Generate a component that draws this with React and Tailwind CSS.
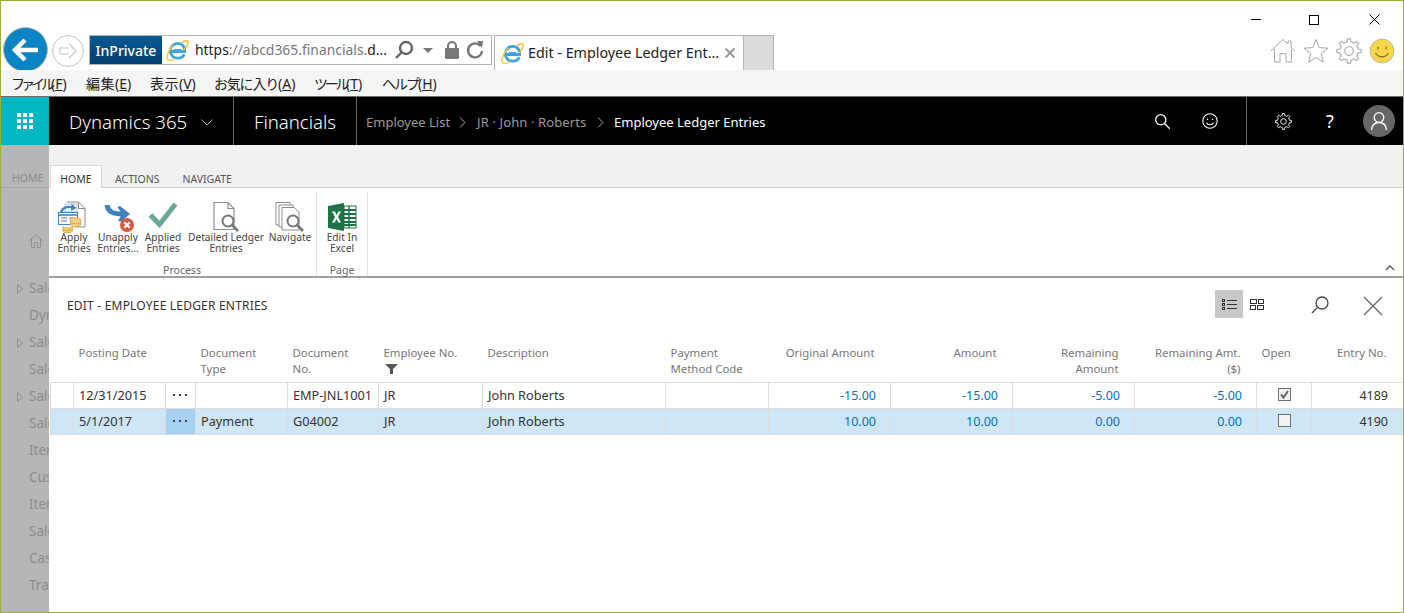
import React from "react";

const FONT = '"Noto Sans", "Noto Sans CJK JP", sans-serif';

function IE({ size = 24 }) {
  return (
    <svg width={size} height={size} viewBox="0 0 24 24" fill="none">
      <path d="M4.5 13 H19.5 C20 7.5 16.5 4.5 12.5 4.5 C8 4.5 4.5 8 4.5 12.5 C4.5 17 8 20 12.5 20 C15.5 20 18 18.5 19.2 16" stroke="#3fa4de" strokeWidth="3" />
      <path d="M8 11 H16" stroke="#3fa4de" strokeWidth="1" />
      <path d="M17 3.5 C20 1.5 23 1.2 23.2 3 C23.5 5 21 8.5 19 11" stroke="#f2b92f" strokeWidth="1.5" strokeLinecap="round" />
      <path d="M7 7 C3 11 0.5 17 1.2 20.5 C1.8 23 5 23 9 21" stroke="#f2c94a" strokeWidth="1.6" strokeLinecap="round" />
    </svg>
  );
}

function gearPath() {
  const n = 8;
  const pts = [];
  for (let i = 0; i < n; i++) {
    const a = (i * 2 * Math.PI) / n;
    const w = (2 * Math.PI) / n;
    [
      [8.6, -0.5 * w],
      [8.6, -0.27 * w],
      [11.3, -0.16 * w],
      [11.3, 0.16 * w],
      [8.6, 0.27 * w],
    ].forEach(([r, d]) => {
      pts.push(`${(12 + r * Math.sin(a + d)).toFixed(2)} ${(12 - r * Math.cos(a + d)).toFixed(2)}`);
    });
  }
  return "M" + pts.join(" L") + " Z";
}

function Gear({ size, color, sw = 1 }) {
  return (
    <svg width={size} height={size} viewBox="0 0 24 24" fill="none" stroke={color} strokeWidth={sw}>
      <circle cx="12" cy="12" r="4" />
      <path d={gearPath()} strokeLinejoin="round" />
    </svg>
  );
}

function Smile({ size, color, sw = 1.2 }) {
  return (
    <svg width={size} height={size} viewBox="0 0 20 20" fill="none" stroke={color} strokeWidth={sw}>
      <circle cx="10" cy="10" r="8" />
      <circle cx="7.2" cy="8" r="0.9" fill={color} stroke="none" />
      <circle cx="12.8" cy="8" r="0.9" fill={color} stroke="none" />
      <path d="M6 12 C7.5 14.8 12.5 14.8 14 12" />
    </svg>
  );
}

function Lens({ size, color, sw = 1.3 }) {
  return (
    <svg width={size} height={size} viewBox="0 0 20 20" fill="none" stroke={color} strokeWidth={sw}>
      <circle cx="12" cy="8" r="6" />
      <path d="M7.6 12.4 L2 18" />
    </svg>
  );
}

function ApplyIcon() {
  return (
    <svg width="32" height="32" viewBox="0 0 32 32" fill="none">
      <path d="M9 1 H20.5 L27 7.5 V26 H18" fill="#fff" stroke="#8a8a8a" />
      <path d="M20.5 1 V7.5 H27" stroke="#8a8a8a" />
      <path d="M7 3 H19 V11 H7 Z" fill="#fff" stroke="#a9bed6" />
      <path d="M3 11.5 C4.5 6 10 5 15 6.5" stroke="#3f85c5" strokeWidth="2.4" />
      <path d="M13.5 2.5 L18.5 7 L13 10 Z" fill="#3f85c5" />
      <rect x="0.5" y="11.5" width="19" height="12" fill="#fff" stroke="#3f85c5" />
      <path d="M0.5 14 H19.5" stroke="#3f85c5" strokeWidth="1.6" />
      <path d="M3 17 H9 M3 20 H9 M11 17 H15" stroke="#3f85c5" />
      <ellipse cx="17.5" cy="18.5" rx="5" ry="1.7" fill="#f4cf86" stroke="#dba94a" />
      <path d="M12.5 18.5 V24 A5 1.7 0 0 0 22.5 24 V18.5" fill="#f4cf86" stroke="#dba94a" />
      <path d="M12.5 21 A5 1.7 0 0 0 22.5 21" stroke="#dba94a" />
      <path d="M5 25.5 A4.7 1.6 0 0 0 14.4 25.5 V30 A4.7 1.6 0 0 1 5 30 Z" fill="#f4cf86" stroke="#dba94a" />
      <path d="M5 28 A4.7 1.6 0 0 0 14.4 28" stroke="#dba94a" />
    </svg>
  );
}

function UnapplyIcon() {
  return (
    <svg width="32" height="32" viewBox="0 0 32 32" fill="none">
      <path d="M5 4 C6 11 11 13 21 13" stroke="#3f7fbf" strokeWidth="5" />
      <path d="M18 5 L28 13 L19 20.5 L16 20 L20 13 L15.5 6 Z" fill="#3f7fbf" />
      <circle cx="25" cy="24" r="7" fill="#d8573c" />
      <path d="M22.2 21.2 L27.8 26.8 M27.8 21.2 L22.2 26.8" stroke="#fff" strokeWidth="2.2" />
    </svg>
  );
}

function CheckIcon() {
  return (
    <svg width="32" height="32" viewBox="0 0 32 32" fill="none">
      <path d="M3.5 14 L12.5 23.5 L28.5 3" stroke="#6ba797" strokeWidth="5" />
    </svg>
  );
}

function DocLens() {
  return (
    <svg width="32" height="32" viewBox="0 0 32 32" fill="none">
      <path d="M4 1.5 H18 L24 7.5 V28.5 H4 Z" fill="#fff" stroke="#8f8f8f" strokeWidth="1.2" />
      <path d="M18 1.5 V7.5 H24" stroke="#8f8f8f" strokeWidth="1.2" />
      <circle cx="18" cy="20" r="5.5" fill="#fff" stroke="#767676" strokeWidth="2" />
      <path d="M22 24 L28 30" stroke="#767676" strokeWidth="2.6" />
    </svg>
  );
}

function DocsLens() {
  return (
    <svg width="32" height="32" viewBox="0 0 32 32" fill="none">
      <path d="M2 1.5 H16 V24 H2 Z" fill="#fff" stroke="#8f8f8f" />
      <path d="M5 4 H19 V26 H5 Z" fill="#fff" stroke="#8f8f8f" />
      <path d="M8 6.5 H20 L25 11 V29 H8 Z" fill="#fff" stroke="#8f8f8f" />
      <circle cx="19" cy="20" r="5.5" fill="#fff" stroke="#767676" strokeWidth="2" />
      <path d="M23 24 L29 30" stroke="#767676" strokeWidth="2.6" />
    </svg>
  );
}

function ExcelIcon() {
  return (
    <svg width="30" height="30" viewBox="0 0 30 30" fill="none">
      <path d="M1 4 L17 1 V29 L1 26 Z" fill="#1f7246" />
      <path d="M5 9.5 H8 L9.6 13 L11.3 9.5 H14 L11 15 L14 20.5 H11.2 L9.5 16.8 L7.8 20.5 H5 L8 15 Z" fill="#fff" />
      <rect x="17" y="4" width="12" height="22" fill="#fff" stroke="#1f7246" />
      <path d="M17 8 H29 M17 12 H29 M17 16 H29 M17 20 H29 M17 23 H29" stroke="#1f7246" strokeWidth="2" />
      <path d="M22 4 V26" stroke="#1f7246" strokeWidth="1.5" />
    </svg>
  );
}

const menu = [
  ["ファイル", "F", "tracking-[-4px]", "w-[57px]"],
  ["編集", "E", "tracking-[0.5px]", "w-[46px]"],
  ["表示", "V", "tracking-[0.5px]", "w-[46px]"],
  ["お気に入り", "A", "tracking-[-1.2px]", "w-[82px]"],
  ["ツール", "T", "tracking-[-3.3px]", "w-[50px]"],
  ["ヘルプ", "H", "tracking-[-2px]", "w-[54px]"],
];

const sideItems = [
  [true, "Sales"],
  [false, "Dynamics"],
  [true, "Sales"],
  [false, "Sales"],
  [true, "Sales"],
  [false, "Sales"],
  [false, "Items"],
  [false, "Customers"],
  [false, "Items"],
  [false, "Sales"],
  [false, "Cash"],
  [false, "Transfer"],
];

const ribbon = [
  ["w-[44px]", <ApplyIcon />, "Apply", "Entries"],
  ["w-[44px]", <UnapplyIcon />, "Unapply", "Entries..."],
  ["w-[46px]", <CheckIcon />, "Applied", "Entries"],
  ["w-[80px]", <DocLens />, "Detailed Ledger", "Entries"],
  ["w-[48px]", <DocsLens />, "Navigate", ""],
];

function RibbonBtn({ w, icon, a, b }) {
  return (
    <div className={`${w} flex flex-col items-center`}>
      <div className="h-[32px] w-[32px] flex items-center justify-center">{icon}</div>
      <div className="mt-[-1px] text-[10.2px] leading-[11px] text-[#444] text-center whitespace-nowrap">
        <div>{a}</div>
        <div>{b}</div>
      </div>
    </div>
  );
}

const headCls = "font-normal align-top pt-[6px] text-[11.4px] leading-[16px] text-[#777] px-[5px]";
const cellCls = "border border-[#dcdcdc] px-[5px] pt-[2px] text-[12.7px] text-[#333] whitespace-nowrap overflow-hidden";
const numCls = "border border-[#dcdcdc] pl-[5px] pr-[14px] pt-[2px] text-right text-[12.5px] text-[#0b6fc0]";

function Dots({ active }) {
  return (
    <td className={`border border-[#dcdcdc] text-center ${active ? "bg-[#a6d1f0]" : ""}`}>
      <div className="flex justify-center gap-[4px] pr-[1px]">
        <span className="w-[2px] h-[2px] bg-[#444]" />
        <span className="w-[2px] h-[2px] bg-[#444]" />
        <span className="w-[2px] h-[2px] bg-[#444]" />
      </div>
    </td>
  );
}

function Row({ date, type, doc, vals, checked, entry, selected }) {
  return (
    <tr className={`h-[26px] ${selected ? "bg-[#cfe6f6]" : "bg-white"}`}>
      <td className="border border-[#dcdcdc]" />
      <td className={cellCls}>{date}</td>
      <Dots active={selected} />
      <td className={cellCls}>{type}</td>
      <td className={cellCls}>{doc}</td>
      <td className={cellCls}>JR</td>
      <td className={cellCls}>John Roberts</td>
      <td className={cellCls} />
      {vals.map((v, i) => (
        <td key={i} className={numCls}>{v}</td>
      ))}
      <td className="border border-[#dcdcdc]">
        <div className="mx-auto mb-[2px] w-[13px] h-[13px] border border-[#707070] bg-[#f2f2f2] flex items-center justify-center">
          {checked && (
            <svg width="11" height="11" viewBox="0 0 11 11" fill="none">
              <path d="M2 5.5 L4.5 8.5 L9 2" stroke="#666" strokeWidth="2" />
            </svg>
          )}
        </div>
      </td>
      <td className="border border-[#dcdcdc] pr-[16px] pt-[2px] text-right text-[12.5px] text-[#333]">{entry}</td>
    </tr>
  );
}

export default function App() {
  return (
    <div
      className="w-[1404px] h-[613px] border border-[#9cb12f] bg-white flex flex-col overflow-hidden"
      style={{ fontFamily: FONT }}
    >
      {/* browser chrome */}
      <div className="h-[69px] flex justify-between shrink-0">
        <div className="flex items-end pl-[2px]">
          <div className="w-[45px] h-[45px] mb-[-2px] rounded-full bg-[#0a84c2] border border-[#b8b8b8] flex items-center justify-center">
            <svg width="28" height="24" viewBox="0 0 28 24" fill="none">
              <path d="M13 2 L3 12 L13 22 M3 12 H26" stroke="#fff" strokeWidth="4.5" />
            </svg>
          </div>
          <div className="ml-[4px] mb-[3px] w-[32px] h-[32px] rounded-full border border-[#c4c4c4] flex items-center justify-center">
            <svg width="20" height="18" viewBox="0 0 20 18" fill="none">
              <path d="M11 2 L18 9 L11 16 M11 6 L2 6 V12 L11 12" stroke="#c8c8c8" strokeWidth="1.2" />
            </svg>
          </div>
          <div className="ml-[5px] mb-[5px] w-[403px] h-[30px] border border-[#b4b4b4] flex items-center pr-[6px]">
            <div className="w-[72px] h-[28px] bg-gradient-to-b from-[#0a5a92] to-[#003f6e] text-white text-[14px] font-medium flex items-center justify-center">
              InPrivate
            </div>
            <div className="ml-[4px] shrink-0">
              <IE size={23} />
            </div>
            <div className="ml-[6px] text-[13.9px] text-[#777] whitespace-nowrap w-[192px]">
              <span className="text-[#222]">https</span>://abcd365.financials.<span className="text-[#222]">d...</span>
            </div>
            <div className="ml-[7px]"><svg width="20" height="20" viewBox="0 0 20 20" fill="none" stroke="#666" strokeWidth="2.4"><circle cx="12" cy="8" r="6" /><path d="M7.6 12.4 L2 18" /></svg></div>
            <div className="ml-[9px] w-0 h-0 border-l-[5px] border-r-[5px] border-t-[5px] border-l-transparent border-r-transparent border-t-[#777]" />
            <div className="ml-[11px]">
              <svg width="16" height="18" viewBox="0 0 16 18" fill="none">
                <rect x="1" y="7" width="14" height="11" rx="1" fill="#777" />
                <path d="M4 8 V5 A4 4 0 0 1 12 5 V8" stroke="#777" strokeWidth="2" />
              </svg>
            </div>
            <div className="ml-[6px]">
              <svg width="18" height="20" viewBox="0 0 18 20" fill="none">
                <path d="M14.5 6 A7 7 0 1 0 16 11" stroke="#777" strokeWidth="2.4" />
                <path d="M11 1 L17 1 L16 8 Z" fill="#777" />
              </svg>
            </div>
          </div>
          <div className="ml-[2px] w-[250px] h-[35px] border border-b-0 border-[#b4b4b4] bg-white flex items-center pl-[6px]">
            <IE size={23} />
            <span className="ml-[4px] text-[14.3px] text-[#222] whitespace-nowrap w-[191px]">Edit - Employee Ledger Ent...</span>
            <svg className="ml-[5px]" width="12" height="12" viewBox="0 0 12 12" fill="none">
              <path d="M1.5 1.5 L10.5 10.5 M10.5 1.5 L1.5 10.5" stroke="#999" strokeWidth="2" />
            </svg>
          </div>
          <div className="w-[30px] h-[35px] border border-l-0 border-b-0 border-[#b4b4b4] bg-[#dcdcdc]" />
        </div>
        <div className="flex flex-col items-end">
          <div className="flex items-center h-[37px]">
            <div className="w-[10px] h-[1px] bg-black mr-[48px]" />
            <div className="w-[10px] h-[10px] border border-black mr-[50px]" />
            <svg className="mr-[23px]" width="11" height="11" viewBox="0 0 11 11" fill="none">
              <path d="M0.5 0.5 L10.5 10.5 M10.5 0.5 L0.5 10.5" stroke="#000" />
            </svg>
          </div>
          <div className="flex items-center mr-[8px] gap-[7px]">
            <svg width="26" height="26" viewBox="0 0 26 26" fill="none" stroke="#a8a8a8">
              <path d="M1 13 L13 1.5 L18 6 V3 H21 V9 L25 13 M4.5 11 V24 H10 V15.5 H16 V24 H21.5 V11" />
            </svg>
            <svg width="26" height="26" viewBox="0 0 26 26" fill="none" stroke="#a8a8a8">
              <path d="M13 1.5 L16.2 9.6 L25 10.2 L18.2 15.7 L20.4 24.2 L13 19.6 L5.6 24.2 L7.8 15.7 L1 10.2 L9.8 9.6 Z" />
            </svg>
            <Gear size={26} color="#a8a8a8" />
            <svg width="26" height="26" viewBox="0 0 26 26" fill="none">
              <circle cx="13" cy="13" r="12" fill="#f8d648" stroke="#b9b9b9" />
              <path d="M9 8.5 V11.5 M17 8.5 V11.5" stroke="#8a7d28" strokeWidth="1.4" />
              <path d="M6.5 15 C9 20 17 20 19.5 15" stroke="#8a7d28" strokeWidth="1.4" />
            </svg>
          </div>
        </div>
      </div>

      {/* menu bar */}
      <div className="h-[27px] bg-[#f5f5f5] border-b border-[#6e6e6e] flex items-center pl-[10px] shrink-0 gap-[18px] text-[14px] text-[#222]">
        {menu.map(([t, k, tr, w], i) => (
          <span key={i} className={`${w} whitespace-nowrap`}>
            <span className={tr}>{t}</span>(<span className="underline">{k}</span>)
          </span>
        ))}
      </div>

      {/* black bar */}
      <div className="h-[48px] bg-black flex items-stretch shrink-0 text-white">
        <div className="w-[48px] bg-[#00b7c3] flex items-center justify-center">
          <div className="grid grid-cols-3 gap-[2px]">
            {Array.from({ length: 9 }).map((_, i) => (
              <span key={i} className="w-[4px] h-[4px] bg-white" />
            ))}
          </div>
        </div>
        <div className="w-[185px] border-r border-[#666] pl-[20px] pt-[2px] flex items-center">
          <span className="text-[18.6px] font-light whitespace-nowrap w-[119px]">Dynamics 365</span>
          <svg className="ml-[13px]" width="12" height="7" viewBox="0 0 12 7" fill="none">
            <path d="M0.5 0.5 L6 6 L11.5 0.5" stroke="#aaa" />
          </svg>
        </div>
        <div className="w-[123px] border-r border-[#666] pl-[20px] pt-[2px] flex items-center">
          <span className="text-[18.6px] font-light">Financials</span>
        </div>
        <div className="flex items-center pl-[9px] pt-[3px] text-[13px] text-[#9a9a9a] whitespace-nowrap">
          <span className="w-[85px]">Employee List</span>
          <svg className="mx-[8px]" width="7" height="11" viewBox="0 0 7 11" fill="none"><path d="M1 0.5 L6 5.5 L1 10.5" stroke="#aaa" /></svg>
          <span className="w-[110px] tracking-[0.12px] ml-[3px]">JR · John · Roberts</span>
          <svg className="mx-[10px]" width="7" height="11" viewBox="0 0 7 11" fill="none"><path d="M1 0.5 L6 5.5 L1 10.5" stroke="#aaa" /></svg>
          <span className="text-white">Employee Ledger Entries</span>
        </div>
        <div className="ml-auto flex items-center">
          <svg width="17" height="17" viewBox="0 0 20 20" fill="none" stroke="#fff" strokeWidth="1.5"><circle cx="8" cy="8" r="6" /><path d="M12.4 12.4 L18.5 18.5" /></svg>
          <div className="ml-[30px]"><Smile size={18} color="#fff" /></div>
          <div className="ml-[27px] w-[1px] h-[48px] bg-[#666]" />
          <div className="ml-[28px]"><Gear size={17} color="#fff" sw={1.3} /></div>
          <span className="ml-[34px] text-[18px] w-[10px]">?</span>
          <div className="ml-[27px] mr-[8px] w-[32px] h-[32px] rounded-full bg-[#666] flex items-center justify-center">
            <svg width="20" height="20" viewBox="0 0 20 20" fill="none" stroke="#fff" strokeWidth="1.3">
              <circle cx="10" cy="6.5" r="4.8" />
              <path d="M2.5 19 C3 13.5 6 11.5 10 11.5 C14 11.5 17 13.5 17.5 19" />
            </svg>
          </div>
        </div>
      </div>

      {/* page */}
      <div className="flex flex-1 min-h-0">
        <div className="w-[48px] shrink-0 bg-[#b6b6b6] overflow-hidden text-[#8c8c8c]">
          <div className="h-[43px] border-b border-[#a9a9a9] flex items-end pl-[11px] text-[10.5px] leading-[18px]">HOME</div>
          <div className="mt-[45px] pl-[27px]">
            <svg width="16" height="16" viewBox="0 0 16 16" fill="none" stroke="#8f8f8f"><path d="M1 8 L8 1.5 L15 8 M3.5 6 V14.5 H6.5 V9.5 H9.5 V14.5 H12.5 V6" /></svg>
          </div>
          <div className="mt-[26px] flex flex-col">
            {sideItems.map(([tri, t], i) => (
              <div key={i} className="h-[27px] flex items-center relative pl-[28px] text-[13.5px] whitespace-nowrap">
                {tri && (
                  <svg className="absolute left-[16px]" width="6" height="10" viewBox="0 0 6 10" fill="none"><path d="M0.5 0.5 L5.5 5 L0.5 9.5 Z" stroke="#8f8f8f" /></svg>
                )}
                {t}
              </div>
            ))}
          </div>
        </div>

        <div className="flex-1 min-w-0 flex flex-col">
          {/* tabs */}
          <div className="h-[43px] bg-[#f1f1f1] border-b border-[#c9d3da] flex items-end pl-[1px] text-[10.5px] leading-[16px] text-[#555] shrink-0">
            <div className="w-[52px] h-[23px] bg-white border border-b-0 border-[#d8d8d8] flex items-center justify-center pt-[3px] mb-[-1px] text-[#333]">HOME</div>
            <div className="ml-[13px] h-[17px] flex items-center">ACTIONS</div>
            <div className="ml-[23px] h-[17px] flex items-center">NAVIGATE</div>
          </div>
          {/* ribbon */}
          <div className="h-[90px] border-b-2 border-[#a0a0a0] flex items-stretch relative shrink-0 pt-[4px]">
            <div className="w-[268px] border-r border-[#e2e2e2] flex flex-col pl-[3px]">
              <div className="flex pt-[9px]">
                {ribbon.map(([w, ic, a, b], i) => (
                  <RibbonBtn key={i} w={w} icon={ic} a={a} b={b} />
                ))}
              </div>
              <div className="mt-auto text-center text-[10.5px] leading-[12px] text-[#666] pr-[4px]">Process</div>
            </div>
            <div className="w-[51px] border-r border-[#e2e2e2] flex flex-col items-center">
              <div className="pt-[9px]">
                <RibbonBtn w="w-[50px]" icon={<ExcelIcon />} a="Edit In" b="Excel" />
              </div>
              <div className="mt-auto text-[10.5px] leading-[12px] text-[#666]">Page</div>
            </div>
            <svg className="absolute right-[8px] bottom-[5px]" width="10" height="7" viewBox="0 0 10 7" fill="none">
              <path d="M1 6 L5 2 L9 6" stroke="#555" strokeWidth="1.3" />
            </svg>
          </div>

          {/* title row */}
          <div className="h-[41px] flex items-center pl-[18px] shrink-0 mt-[7px]">
            <span className="text-[12px] text-[#333] tracking-[0.2px]">EDIT - EMPLOYEE LEDGER ENTRIES</span>
            <div className="ml-auto flex items-center mb-[3px]">
              <div className="w-[28px] h-[28px] bg-[#c8c8c8] flex items-center justify-center">
                <svg width="15" height="11" viewBox="0 0 15 11" fill="none" stroke="#333">
                  <path d="M5 1.5 H15 M5 5.5 H15 M5 9.5 H15" />
                  <rect x="0.5" y="0.5" width="2" height="2" />
                  <rect x="0.5" y="4.5" width="2" height="2" />
                  <rect x="0.5" y="8.5" width="2" height="2" />
                </svg>
              </div>
              <svg className="ml-[7px]" width="14" height="11" viewBox="0 0 14 11" fill="none" stroke="#333">
                <rect x="0.5" y="0.5" width="6" height="4" />
                <rect x="8.5" y="0.5" width="5" height="4" />
                <rect x="0.5" y="6.5" width="5" height="4" />
                <rect x="7.5" y="6.5" width="6" height="4" />
              </svg>
              <div className="ml-[46px] mt-[1px]"><Lens size={20} color="#444" /></div>
              <svg className="ml-[33px] mr-[20px] mt-[3px]" width="20" height="20" viewBox="0 0 20 20" fill="none">
                <path d="M1 1 L19 19 M19 1 L1 19" stroke="#666" strokeWidth="1.3" />
              </svg>
            </div>
          </div>

          {/* table */}
          <table className="table-fixed border-collapse w-[1354px] ml-[1px] mt-[13px]">
            <colgroup>
              <col className="w-[23px]" />
              <col className="w-[92px]" />
              <col className="w-[30px]" />
              <col className="w-[92px]" />
              <col className="w-[91px]" />
              <col className="w-[104px]" />
              <col className="w-[183px]" />
              <col className="w-[103px]" />
              <col className="w-[122px]" />
              <col className="w-[122px]" />
              <col className="w-[122px]" />
              <col className="w-[122px]" />
              <col className="w-[55px]" />
              <col className="w-[93px]" />
            </colgroup>
            <thead>
              <tr className="h-[43px]">
                <th />
                <th className={`${headCls} text-left`}>Posting Date</th>
                <th />
                <th className={`${headCls} text-left`}>Document<br />Type</th>
                <th className={`${headCls} text-left`}>Document<br />No.</th>
                <th className={`${headCls} text-left`}>
                  Employee No.
                  <svg className="mt-[3px] ml-[1px]" width="13" height="10" viewBox="0 0 13 10" fill="#555"><path d="M0 0 H13 L8 5 V10 H5 V5 Z" /></svg>
                </th>
                <th className={`${headCls} text-left`}>Description</th>
                <th className={`${headCls} text-left`}>Payment<br />Method Code</th>
                <th className={`${headCls} text-right pr-[16px]`}>Original Amount</th>
                <th className={`${headCls} text-right pr-[16px]`}>Amount</th>
                <th className={`${headCls} text-right pr-[16px]`}>Remaining<br />Amount</th>
                <th className={`${headCls} text-right pr-[16px]`}>Remaining Amt.<br />($)</th>
                <th className={`${headCls} text-left`}>Open</th>
                <th className={`${headCls} text-right pr-[18px]`}>Entry No.</th>
              </tr>
            </thead>
            <tbody>
              <Row date="12/31/2015" type="" doc="EMP-JNL1001" vals={["-15.00", "-15.00", "-5.00", "-5.00"]} checked entry="4189" />
              <Row date="5/1/2017" type="Payment" doc="G04002" vals={["10.00", "10.00", "0.00", "0.00"]} entry="4190" selected />
            </tbody>
          </table>
        </div>
      </div>
    </div>
  );
}
